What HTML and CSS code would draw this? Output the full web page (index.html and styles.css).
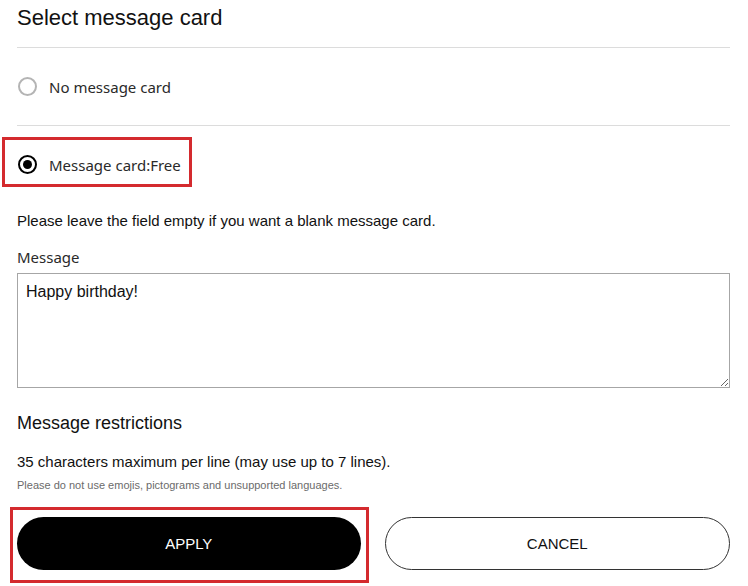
FILE: index.html
```html
<!DOCTYPE html>
<html lang="en">
<head>
<meta charset="utf-8">
<title>Select message card</title>
<link rel="stylesheet" href="styles.css">
</head>
<body>
<div class="panel">
  <h1 class="title">Select message card</h1>
  <div class="divider"></div>
  <div class="option">
    <label class="radio-row">
      <span class="radio"></span>
      <span class="radio-label">No message card</span>
    </label>
  </div>
  <div class="divider"></div>
  <div class="option">
    <label class="radio-row highlight highlight-radio">
      <span class="radio checked"></span>
      <span class="radio-label">Message card:Free</span>
    </label>
  </div>
  <p class="hint">Please leave the field empty if you want a blank message card.</p>
  <div class="field-label">Message</div>
  <textarea class="message">Happy birthday!</textarea>
  <h2 class="subtitle">Message restrictions</h2>
  <p class="rule">35 characters maximum per line (may use up to 7 lines).</p>
  <p class="note">Please do not use emojis, pictograms and unsupported languages.</p>
  <div class="actions">
    <button class="btn btn-primary highlight highlight-btn">APPLY</button>
    <button class="btn btn-secondary">CANCEL</button>
  </div>
</div>
</body>
</html>
```

FILE: styles.css
```css
html, body {
  margin: 0;
  padding: 0;
  background: #fff;
}
body {
  font-family: "Liberation Sans", Arial, sans-serif;
  color: #111;
  min-height: 586px;
}
.panel {
  width: 713px;
  padding-left: 17px;
  padding-bottom: 16px;
}
.title {
  margin: 0;
  padding-top: 5px;
  font-size: 22px;
  line-height: 26px;
  font-weight: normal;
  color: #111;
}
.divider {
  margin-top: 16px;
  height: 1px;
  background: #dcdcdc;
}
.option + .divider {
  margin-top: 0;
}
.option {
  height: 77px;
  display: flex;
  align-items: center;
}
.option:last-of-type {
  height: 78px;
}
.radio-row {
  display: inline-flex;
  align-items: center;
  gap: 12px;
  height: 20px;
  padding-left: 1px;
}
.radio {
  box-sizing: border-box;
  width: 19px;
  height: 19px;
  border-radius: 50%;
  border: 2px solid #b4b4b4;
  display: flex;
  align-items: center;
  justify-content: center;
}
.radio.checked {
  border-color: #000;
}
.radio.checked::after {
  content: "";
  width: 9px;
  height: 9px;
  border-radius: 50%;
  background: #000;
}
.radio-label {
  font-family: "Noto Sans", "Open Sans", sans-serif;
  font-size: 15px;
  color: #2a2a2a;
}
.highlight {
  position: relative;
}
.highlight::before {
  content: "";
  position: absolute;
  border: 3px solid #d42a2e;
  pointer-events: none;
}
.highlight-radio::before {
  top: -18px;
  bottom: -12px;
  left: -15px;
  right: -11px;
}
.highlight-btn::before {
  top: -10px;
  bottom: -13px;
  left: -7px;
  right: -8px;
}
.hint {
  margin: 9px 0 0;
  font-size: 15px;
  line-height: 17px;
  color: #111;
}
.field-label {
  margin-top: 18px;
  font-family: "Noto Sans", "Open Sans", sans-serif;
  font-size: 15px;
  line-height: 21px;
  color: #2a2a2a;
}
.message {
  display: block;
  box-sizing: border-box;
  margin-top: 5px;
  width: 713px;
  height: 115px;
  padding: 8px;
  border: 1px solid #a6a6a6;
  font-family: "Liberation Sans", Arial, sans-serif;
  font-size: 16px;
  line-height: 20px;
  color: #111;
  resize: both;
  outline: none;
}
.subtitle {
  margin: 24px 0 0;
  font-size: 18px;
  line-height: 22px;
  font-weight: normal;
  color: #111;
}
.rule {
  margin: 19px 0 0;
  font-size: 15px;
  line-height: 17px;
  color: #111;
}
.note {
  margin: 9px 0 0;
  font-size: 11px;
  line-height: 13px;
  color: #6b6b6b;
}
.actions {
  margin-top: 25px;
  display: flex;
  gap: 24px;
}
.btn {
  flex: 1;
  height: 53px;
  border-radius: 27px;
  font-family: "Liberation Sans", Arial, sans-serif;
  font-size: 15px;
  cursor: pointer;
}
.btn-primary {
  background: #000;
  color: #fff;
  border: none;
}
.btn-secondary {
  background: #fff;
  color: #111;
  border: 1px solid #333;
}
```
